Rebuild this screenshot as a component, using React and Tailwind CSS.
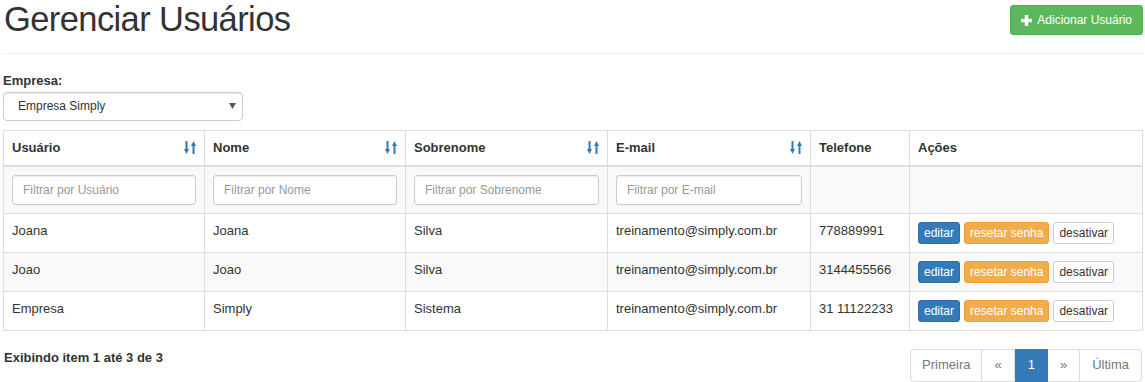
import React from "react";

const SortIcon = () => (
  <svg width="12" height="13" viewBox="0 0 12 13" className="shrink-0">
    <g fill="#337ab7">
      <rect x="1.5" y="0" width="2" height="9" />
      <polygon points="0,8 5,8 2.5,13" />
      <rect x="8.5" y="4" width="2" height="9" />
      <polygon points="7,5 12,5 9.5,0" />
    </g>
  </svg>
);

const rows = [
  { u: "Joana", n: "Joana", s: "Silva", e: "treinamento@simply.com.br", t: "778889991" },
  { u: "Joao", n: "Joao", s: "Silva", e: "treinamento@simply.com.br", t: "3144455566" },
  { u: "Empresa", n: "Simply", s: "Sistema", e: "treinamento@simply.com.br", t: "31 11122233" },
];

const th = "border border-[#ddd] border-b-2 px-2 py-2 text-left font-bold align-bottom leading-[18.57px]";
const td = "border border-[#ddd] px-2 py-2 align-top leading-[18.57px]";

const Filter = ({ ph }) => (
  <input
    placeholder={ph}
    className="block w-full h-[30px] px-[10px] text-[12px] border border-[#ccc] rounded-[3px] bg-white placeholder:text-[#999] outline-none shadow-[inset_0_1px_1px_rgba(0,0,0,0.075)]"
  />
);

export default function App() {
  return (
    <div className="font-['Liberation_Sans',Arial,sans-serif] text-[13px] text-[#333] pl-[3px] pr-[2px] bg-white">
      <div className="flex justify-between items-start h-[54px] border-b border-[#eee]">
        <h1 className="text-[34.5px] leading-[38px] font-normal tracking-[-0.6px] text-[#333] pl-[1px]">Gerenciar Usuários</h1>
        <button className="mt-[5px] h-[30px] px-[10px] flex items-center gap-[5px] text-[12px] text-white bg-[#5cb85c] border border-[#4cae4c] rounded-[3px]">
          <svg width="11" height="11" viewBox="0 0 11 11">
            <rect x="3.8" y="0" width="3.4" height="11" fill="#fff" />
            <rect x="0" y="3.8" width="11" height="3.4" fill="#fff" />
          </svg>
          Adicionar Usuário
        </button>
      </div>

      <div className="mt-[18px] font-bold leading-[18.57px]">Empresa:</div>
      <div className="mt-[1px] w-[240px] h-[29px] border border-[#ccc] rounded-[4px] flex items-center justify-between pl-[14px] pr-[6px] text-[12px] text-[#333] shadow-[inset_0_1px_1px_rgba(0,0,0,0.075)]">
        <span>Empresa Simply</span>
        <svg width="7" height="6" viewBox="0 0 7 6"><polygon points="0,0 7,0 3.5,6" fill="#555" /></svg>
      </div>

      <table className="mt-[9px] w-full border-collapse table-fixed">
        <colgroup>
          <col className="w-[201px]" />
          <col className="w-[201px]" />
          <col className="w-[202px]" />
          <col className="w-[203px]" />
          <col className="w-[99px]" />
          <col />
        </colgroup>
        <thead>
          <tr>
            {["Usuário", "Nome", "Sobrenome", "E-mail"].map((h) => (
              <th key={h} className={th}>
                <div className="flex justify-between items-center">
                  <span>{h}</span>
                  <SortIcon />
                </div>
              </th>
            ))}
            <th className={th}>Telefone</th>
            <th className={th}>Ações</th>
          </tr>
        </thead>
        <tbody>
          <tr className="bg-[#f9f9f9]">
            <td className={td}><Filter ph="Filtrar por Usuário" /></td>
            <td className={td}><Filter ph="Filtrar por Nome" /></td>
            <td className={td}><Filter ph="Filtrar por Sobrenome" /></td>
            <td className={td}><Filter ph="Filtrar por E-mail" /></td>
            <td className={td}></td>
            <td className={td}></td>
          </tr>
          {rows.map((r, i) => (
            <tr key={i} className={i % 2 === 1 ? "bg-[#f9f9f9]" : "bg-white"}>
              <td className={td}>{r.u}</td>
              <td className={td}>{r.n}</td>
              <td className={td}>{r.s}</td>
              <td className={td}>{r.e}</td>
              <td className={td}>{r.t}</td>
              <td className={td}>
                <div className="flex gap-[4px]">
                  <button className="h-[22px] px-[5px] text-[12px] leading-[18px] text-white bg-[#337ab7] border border-[#2e6da4] rounded-[3px]">editar</button>
                  <button className="h-[22px] px-[5px] text-[12px] leading-[18px] text-white bg-[#f0ad4e] border border-[#eea236] rounded-[3px]">resetar senha</button>
                  <button className="h-[22px] px-[5px] text-[12px] leading-[18px] text-[#333] bg-white border border-[#ccc] rounded-[3px]">desativar</button>
                </div>
              </td>
            </tr>
          ))}
        </tbody>
      </table>

      <div className="mt-[18px] flex justify-between items-start">
        <div className="font-bold leading-[18.57px] pl-[1px]">Exibindo item 1 até 3 de 3</div>
        <div className="flex mr-[1px]">
          <span className="px-[11px] py-[6px] leading-[18.57px] border border-[#ddd] text-[#777] rounded-l-[4px]">Primeira</span>
          <span className="px-[12px] py-[6px] leading-[18.57px] border border-[#ddd] border-l-0 text-[#777]">«</span>
          <span className="px-[12px] py-[6px] leading-[18.57px] border border-[#337ab7] bg-[#337ab7] text-white">1</span>
          <span className="px-[12px] py-[6px] leading-[18.57px] border border-[#ddd] border-l-0 text-[#777]">»</span>
          <span className="px-[12px] py-[6px] leading-[18.57px] border border-[#ddd] border-l-0 text-[#777] rounded-r-[4px]">Última</span>
        </div>
      </div>
    </div>
  );
}
